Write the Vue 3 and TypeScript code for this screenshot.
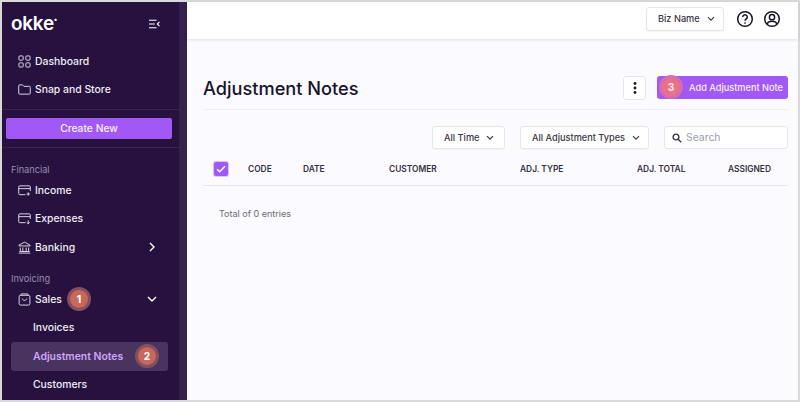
<template>
  <div class="frame">
    <aside class="sidebar">
      <div class="side-inner">
        <div class="brand">
          <span class="logo">okke<sup>•</sup></span>
          <svg class="collapse" width="12" height="10" viewBox="0 0 14 12" fill="none" stroke="#fff" stroke-width="1.3">
            <path d="M1 1.5h9M1 6h7M1 10.5h9M13.5 3.5 11 6l2.5 2.5" />
          </svg>
        </div>

        <nav class="group">
          <a class="item">
            <svg class="ico" viewBox="0 0 14 14"><rect x="1" y="1" width="4.6" height="4.6" rx="1" /><rect x="8.4" y="1" width="4.6" height="4.6" rx="1" /><rect x="1" y="8.4" width="4.6" height="4.6" rx="1" /><rect x="8.4" y="8.4" width="4.6" height="4.6" rx="1" /></svg>
            Dashboard
          </a>
          <a class="item">
            <svg class="ico" viewBox="0 0 14 14"><path d="M.8 11V3a1 1 0 0 1 1-1h3l1.5 1.6h5.900a1 1 0 0 1 1 1V11a1 1 0 0 1-1 1H1.800a1 1 0 0 1-1-1z" /></svg>
            Snap and Store
          </a>
        </nav>

        <div class="create-wrap">
          <button class="create">Create New</button>
        </div>

        <div class="section">Financial</div>
        <a class="item">
          <svg class="ico" viewBox="0 0 14 14"><path d="M8 11.500H1.800a1 1 0 0 1-1-1V3a1 1 0 0 1 1-1h10.400a1 1 0 0 1 1 1v4.500M.8 5h12.400M11 9v3.600M9.200 10.800h3.600" /></svg>
          Income
        </a>
        <a class="item">
          <svg class="ico" viewBox="0 0 14 14"><path d="M8 11.500H1.800a1 1 0 0 1-1-1V3a1 1 0 0 1 1-1h10.400a1 1 0 0 1 1 1v4.500M.8 5h12.400M11 9v3.600M9.400 11.200l1.600 1.500 1.600-1.500" /></svg>
          Expenses
        </a>
        <a class="item">
          <svg class="ico" viewBox="0 0 14 14"><path d="M1 4.500 7 1.200l6 3.300v.8H1zM2.500 7v4M5.200 7v4M8.800 7v4M11.500 7v4M1.500 11.300h11M.8 13h12.400" /></svg>
          Banking
          <svg class="caret" width="8" height="10" viewBox="0 0 8 10"><path d="M2 1l4 4-4 4" /></svg>
        </a>

        <div class="section second">Invoicing</div>
        <a class="item">
          <svg class="ico" viewBox="0 0 14 14"><rect x="1.200" y="2.500" width="11.600" height="10.500" rx="1.600" /><path d="M2.800 2.500 3.500 1h7l.7 1.500M4.500 6c.4 2.600 4.600 2.600 5 0" /></svg>
          Sales
          <svg class="caret down" width="10" height="8" viewBox="0 0 10 8"><path d="M1 2l4 4 4-4" /></svg>
          <span class="step red one">1</span>
        </a>
        <a class="sub">Invoices</a>
        <a class="sub active">
          Adjustment Notes
          <span class="step red two">2</span>
        </a>
        <a class="sub">Customers</a>
      </div>
      <div class="scrollbar"></div>
    </aside>

    <div class="main">
      <header class="topbar">
        <button class="select biz">Biz Name <svg class="chev" width="8" height="6" viewBox="0 0 8 6"><path d="M1 1.200l3 3 3-3" /></svg></button>
        <svg class="top-ico" width="18" height="18" viewBox="0 0 18 18" fill="none" stroke="#1b1429" stroke-width="1.500">
          <circle cx="9" cy="9" r="7.300" />
          <path d="M6.700 7a2.300 2.300 0 1 1 3.500 2c-.8.500-1.200 1-1.200 1.800" />
          <circle cx="9" cy="13" r=".5" fill="#1b1429" stroke-width=".7" />
        </svg>
        <svg class="top-ico" width="18" height="18" viewBox="0 0 18 18" fill="none" stroke="#1b1429" stroke-width="1.500">
          <circle cx="9" cy="9" r="7.300" />
          <circle cx="9" cy="7.200" r="2.600" />
          <path d="M3.900 14c1-2 3-2.700 5.100-2.700s4.100.7 5.100 2.700" />
        </svg>
      </header>

      <section class="content">
        <div class="title-row">
          <h1>Adjustment Notes</h1>
          <button class="more">
            <svg width="4" height="14" viewBox="0 0 4 14" fill="#1b1429"><circle cx="2" cy="2.500" r="1.400" /><circle cx="2" cy="7" r="1.400" /><circle cx="2" cy="11.500" r="1.400" /></svg>
          </button>
          <button class="add">
            <span class="step pink">3</span>
            Add Adjustment Note
          </button>
        </div>

        <div class="filters">
          <button class="select">All Time <svg class="chev" width="8" height="6" viewBox="0 0 8 6"><path d="M1 1.200l3 3 3-3" /></svg></button>
          <button class="select types">All Adjustment Types <svg class="chev" width="8" height="6" viewBox="0 0 8 6"><path d="M1 1.200l3 3 3-3" /></svg></button>
          <div class="search">
            <svg width="10" height="10" viewBox="0 0 10 10" fill="none" stroke="#3a3547" stroke-width="1.400"><circle cx="4" cy="4" r="2.900" /><path d="M6.200 6.200 9.200 9.200" /></svg>
            <span>Search</span>
          </div>
        </div>

        <div class="thead">
          <span class="check">
            <svg width="10" height="8" viewBox="0 0 10 8" fill="none" stroke="#fff" stroke-width="1.500"><path d="M1 4.200 3.700 6.800 9 1.200" /></svg>
          </span>
          <span v-for="col in columns" :key="col.label">{{ col.label }}</span>
        </div>

        <p class="total">Total of 0 entries</p>
      </section>
    </div>
  </div>
</template>

<script setup lang="ts">
const columns = [
  { label: 'CODE' },
  { label: 'DATE' },
  { label: 'CUSTOMER' },
  { label: 'ADJ. TYPE' },
  { label: 'ADJ. TOTAL' },
  { label: 'ASSIGNED' },
];
</script>

<style>
html, body {
  margin: 0;
  background: #d9d9d9;
  overflow: hidden;
}
</style>

<style scoped>
.frame {
  width: 800px;
  height: 402px;
  box-sizing: border-box;
  padding: 2px;
  display: flex;
  overflow: hidden;
  background: #d9d9d9;
  font-family: Inter, "Liberation Sans", sans-serif;
}

.sidebar {
  width: 185px;
  flex-shrink: 0;
  display: flex;
  background: #27123f;
  overflow: hidden;
  color: #fff;
}
.side-inner {
  width: 177px;
  flex-shrink: 0;
}
.scrollbar {
  width: 8px;
  background: #33204c;
}

.brand {
  height: 45px;
  box-sizing: border-box;
  padding: 0 19px 2px 9px;
  display: flex;
  align-items: center;
  justify-content: space-between;
}
.logo {
  font-size: 19px;
  font-weight: 600;
  letter-spacing: -0.3px;
  line-height: 1;
}
.logo sup {
  font-size: 7px;
  vertical-align: 8px;
  line-height: 0;
}

.group {
  padding-bottom: 4.5px;
  border-bottom: 1px solid #38244f;
}

.item {
  position: relative;
  height: 28.5px;
  display: flex;
  align-items: center;
  padding-left: 16px;
  font-size: 10.400px;
  font-weight: 500;
  color: #f1edf6;
}
.ico {
  width: 13px;
  height: 13px;
  margin: 0 4px 0 0;
  fill: none;
  stroke: #e6e0ee;
  stroke-width: 1;
  flex-shrink: 0;
}
.caret {
  position: absolute;
  left: 146px;
  fill: none;
  stroke: #fff;
  stroke-width: 1.400;
}
.caret.down {
  left: 145px;
}

.create-wrap {
  padding: 8px 7px 8px 4px;
  border-bottom: 1px solid #38244f;
}
.create {
  display: block;
  width: 100%;
  height: 21px;
  padding: 0;
  border: 0;
  border-radius: 2px;
  background: #a158f5;
  color: #f7f0ff;
  font: 500 10.300px Inter, "Liberation Sans", sans-serif;
}

.section {
  padding: 15px 0 0 9px;
  height: 13px;
  font-size: 9.200px;
  line-height: 13px;
  color: #9a8bab;
  margin-bottom: 0.5px;
}
.section.second {
  padding-top: 10px;
}

.sub {
  position: relative;
  height: 28.5px;
  margin: 0 11px 0 9px;
  padding-left: 22px;
  display: flex;
  align-items: center;
  font-size: 10.400px;
  font-weight: 500;
  color: #f1edf6;
  border-radius: 3px;
}
.sub.active {
  background: #49345f;
  color: #cfa3fb;
  font-weight: 600;
}

.step {
  position: absolute;
  width: 18px;
  height: 18px;
  border-radius: 50%;
  display: flex;
  align-items: center;
  justify-content: center;
  font-size: 10px;
  font-weight: 800;
  color: #fff;
}
.step.red {
  background: #c8675a;
  box-shadow: 0 0 0 3px #85505e;
}
.step.one {
  left: 68px;
  top: 5px;
}
.step.two {
  left: 127px;
  top: 5px;
}
.step.pink {
  left: 5px;
  top: 2px;
  background: #ec7089;
  box-shadow: 0 0 0 3px #d56bb0;
  color: #fbe4e8;
}

.main {
  flex: 1;
  min-width: 0;
  display: flex;
  flex-direction: column;
  background: #fbfafe;
}

.topbar {
  height: 37px;
  flex-shrink: 0;
  box-sizing: border-box;
  display: flex;
  align-items: center;
  justify-content: flex-end;
  padding: 0 17px 4px 0;
  background: #fff;
  box-shadow: 0 1px 3px rgba(30, 20, 50, 0.12);
}
.top-ico {
  margin-left: 9.500px;
}

.select {
  height: 24px;
  box-sizing: border-box;
  padding: 0 0 0 11px;
  display: inline-flex;
  align-items: center;
  gap: 7px;
  background: #fff;
  border: 1px solid #e6e5ea;
  border-radius: 3px;
  box-shadow: 0 1px 1px rgba(30, 20, 50, 0.04);
  font: 500 9.200px Inter, "Liberation Sans", sans-serif;
  color: #39363f;
  white-space: nowrap;
}
.select.biz {
  width: 78px;
  margin-right: 2px;
}
.chev {
  flex-shrink: 0;
  fill: none;
  stroke: #39363f;
  stroke-width: 1.200;
}

.content {
  flex: 1;
  padding: 0 10px 0 16px;
}

.title-row {
  height: 71px;
  box-sizing: border-box;
  padding-top: 37px;
  display: flex;
  align-items: flex-start;
  border-bottom: 1px solid #efeef2;
}
h1 {
  margin: 0;
  font-size: 18.200px;
  line-height: 24px;
  font-weight: 500;
  color: #17132a;
  flex: 1;
}
.more {
  width: 23px;
  height: 24px;
  padding: 0;
  margin-right: 11px;
  display: flex;
  align-items: center;
  justify-content: center;
  background: #fff;
  border: 1px solid #e6e5ea;
  border-radius: 3px;
}
.add {
  position: relative;
  width: 131px;
  height: 23px;
  padding: 0 0 0 27px;
  border: 0;
  border-radius: 3px;
  background: #a158f5;
  color: #f7f0ff;
  font: 500 9.200px Inter, "Liberation Sans", sans-serif;
  white-space: nowrap;
}

.filters {
  height: 42px;
  box-sizing: border-box;
  padding-top: 16px;
  display: flex;
  align-items: flex-start;
}
.filters .select {
  height: 23px;
}
.filters .select:first-child {
  width: 73px;
  margin-left: 229px;
}
.select.types {
  width: 129px;
  margin-left: 15px;
}
.search {
  width: 124px;
  height: 23px;
  box-sizing: border-box;
  margin-left: 15px;
  padding-left: 7px;
  display: flex;
  align-items: center;
  gap: 4px;
  background: #fff;
  border: 1px solid #e6e5ea;
  border-radius: 3px;
  font-size: 10.400px;
  color: #9a9dae;
}

.thead {
  height: 34px;
  border-bottom: 1px solid #e9e8ed;
  font-size: 8.400px;
  font-weight: 600;
  color: #34313f;
  display: grid;
  grid-template-columns: 45px 55px 86px 131px 117px 91px 1fr;
  align-items: center;
  box-sizing: border-box;
}
.check {
  width: 14px;
  height: 14px;
  margin-left: 11px;
  border-radius: 2px;
  background: #a158f5;
  box-shadow: 0 0 0 1px #dcc4fb;
  display: flex;
  align-items: center;
  justify-content: center;
}

.total {
  margin: 22px 0 0 16px;
  font-size: 9px;
  line-height: 12px;
  color: #6c6b75;
}
</style>
